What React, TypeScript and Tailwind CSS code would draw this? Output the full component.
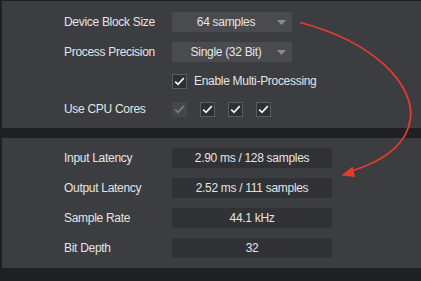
import React from "react";

const font = { fontFamily: '"Liberation Sans", Arial, sans-serif' };

function Check({ disabled = false }: { disabled?: boolean }) {
  return (
    <div
      className={
        disabled
          ? "w-[15px] h-[15px] flex items-center justify-center bg-[#46474b]"
          : "w-[15px] h-[15px] flex items-center justify-center bg-[#2f3034] border border-[#5b5c60]"
      }
    >
      <svg width="11" height="9" viewBox="0 0 11 9">
        <path
          d="M1.2 4.6 L4 7.4 L9.8 1.2"
          fill="none"
          stroke={disabled ? "#7c7d81" : "#f2f2f2"}
          strokeWidth="1.7"
        />
      </svg>
    </div>
  );
}

function Dropdown({ value }: { value: string }) {
  return (
    <div className="relative w-[120px] h-[20px] bg-[#4a4b4f] flex items-center">
      <span className="flex-1 pr-[12px] text-center">{value}</span>
      <svg className="absolute right-[6px] top-[8px]" width="9" height="5" viewBox="0 0 9 5">
        <path d="M0 0 L9 0 L4.5 5 Z" fill="#8b8c90" />
      </svg>
    </div>
  );
}

function ValueBox({ value }: { value: string }) {
  return (
    <div className="w-[160px] h-[20px] bg-[#313236] flex items-center justify-center">{value}</div>
  );
}

function Row({ label, h, children }: { label?: string; h: string; children: React.ReactNode }) {
  return (
    <div className={`flex items-center ${h}`}>
      <div className="w-[108px]">{label}</div>
      <div className="flex items-center">{children}</div>
    </div>
  );
}

export default function App() {
  return (
    <div
      className="relative w-[421px] h-[281px] bg-[#1f2024] pt-[1px] pl-[2px] text-[12px] tracking-[-0.3px] text-[#e4e4e4] overflow-hidden"
      style={font}
    >
      <div className="h-[127px] bg-[#3c3d41] pl-[62px] pt-[6px]">
        <Row label="Device Block Size" h="h-[30px]">
          <Dropdown value="64 samples" />
        </Row>
        <Row label="Process Precision" h="h-[30px]">
          <Dropdown value="Single (32 Bit)" />
        </Row>
        <Row h="h-[28px]">
          <Check />
          <span className="ml-[7px]">Enable Multi-Processing</span>
        </Row>
        <Row label="Use CPU Cores" h="h-[28px]">
          <div className="flex gap-[13px]">
            <Check disabled />
            <Check />
            <Check />
            <Check />
          </div>
        </Row>
      </div>

      <div className="mt-[10px] h-[130px] bg-[#3c3d41] pl-[62px] pt-[5px]">
        <Row label="Input Latency" h="h-[30px]">
          <ValueBox value="2.90 ms / 128 samples" />
        </Row>
        <Row label="Output Latency" h="h-[30px]">
          <ValueBox value="2.52 ms / 111 samples" />
        </Row>
        <Row label="Sample Rate" h="h-[30px]">
          <ValueBox value="44.1 kHz" />
        </Row>
        <Row label="Bit Depth" h="h-[30px]">
          <ValueBox value="32" />
        </Row>
      </div>

      <svg className="absolute left-0 top-0 pointer-events-none" width="421" height="281" viewBox="0 0 421 281">
        <path
          d="M300 22.5 C 375 42, 414 85, 410.5 118 C 407 148, 378 163, 350 171.5"
          fill="none"
          stroke="#e93a2e"
          strokeWidth="1.8"
        />
        <path d="M341.5 175.5 L352.5 166.5 L355 177 Z" fill="#e93a2e" />
      </svg>
    </div>
  );
}
